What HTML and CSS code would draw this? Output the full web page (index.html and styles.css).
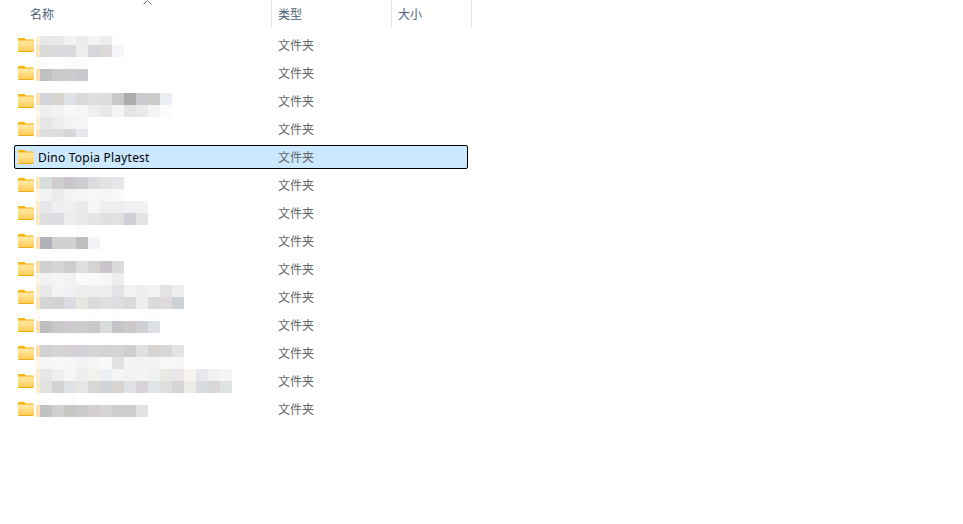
FILE: index.html
```html
<!DOCTYPE html>
<html lang="zh">
<head>
<meta charset="utf-8">
<title>文件列表</title>
<link rel="stylesheet" href="styles.css">
</head>
<body>
<svg class="defs" width="0" height="0" aria-hidden="true">
  <defs>
    <linearGradient id="fg" x1="0" y1="0" x2="0" y2="1">
      <stop offset="0" stop-color="#ffe9a6"/>
      <stop offset="1" stop-color="#fdcf5e"/>
    </linearGradient>
    <symbol id="folder" viewBox="0 0 16 14">
      <path d="M0 1.2C0 .5.5 0 1.2 0h4.6c.4 0 .7.1 1 .4L8.200 1.600H14.800c.7 0 1.200.5 1.200 1.200V4H0z" fill="#f6b308"/>
      <path d="M0 10h16v2.800c0 .7-.5 1.200-1.200 1.200H1.200C.5 14 0 13.500 0 12.800z" fill="#efaa10"/>
      <path d="M0 3.600c0-.5.4-1 1-1h14c.6 0 1 .5 1 1V13H0z" fill="url(#fg)"/>
    </symbol>
  </defs>
</svg>
<div class="pane">
  <div class="header">
    <div class="col col-name">名称<span class="sort"><svg width="9" height="5" viewBox="0 0 9 5"><path d="M.5 4.500 4.500.5l4 4" fill="none" stroke="#777" stroke-width="1"/></svg></span></div>
    <div class="col col-type">类型</div>
    <div class="col col-size">大小</div>
  </div>
  <div class="list">
    <div class="row"><div class="name"><svg class="ico"><use href="#folder"/></svg></div><div class="type">文件夹</div></div>
    <div class="row"><div class="name"><svg class="ico"><use href="#folder"/></svg></div><div class="type">文件夹</div></div>
    <div class="row"><div class="name"><svg class="ico"><use href="#folder"/></svg></div><div class="type">文件夹</div></div>
    <div class="row"><div class="name"><svg class="ico"><use href="#folder"/></svg></div><div class="type">文件夹</div></div>
    <div class="row selected"><div class="name"><svg class="ico"><use href="#folder"/></svg><span class="label">Dino Topia Playtest</span></div><div class="type">文件夹</div></div>
    <div class="row"><div class="name"><svg class="ico"><use href="#folder"/></svg></div><div class="type">文件夹</div></div>
    <div class="row"><div class="name"><svg class="ico"><use href="#folder"/></svg></div><div class="type">文件夹</div></div>
    <div class="row"><div class="name"><svg class="ico"><use href="#folder"/></svg></div><div class="type">文件夹</div></div>
    <div class="row"><div class="name"><svg class="ico"><use href="#folder"/></svg></div><div class="type">文件夹</div></div>
    <div class="row"><div class="name"><svg class="ico"><use href="#folder"/></svg></div><div class="type">文件夹</div></div>
    <div class="row"><div class="name"><svg class="ico"><use href="#folder"/></svg></div><div class="type">文件夹</div></div>
    <div class="row"><div class="name"><svg class="ico"><use href="#folder"/></svg></div><div class="type">文件夹</div></div>
    <div class="row"><div class="name"><svg class="ico"><use href="#folder"/></svg></div><div class="type">文件夹</div></div>
    <div class="row"><div class="name"><svg class="ico"><use href="#folder"/></svg></div><div class="type">文件夹</div></div>
  </div>
</div>
<svg class="mosaic" width="963" height="524" viewBox="0 0 963 524" aria-hidden="true" shape-rendering="crispEdges">
  <g transform="translate(0 36)"><rect class="t9" x="36" fill="#fdf0d6"/><rect class="c9" x="40" fill="#e8e8e8"/><rect class="c9" x="52" fill="#eae9eb"/><rect class="c9" x="64" fill="#f2f2f2"/><rect class="c9" x="76" fill="#ecebed"/><rect class="c9" x="88" fill="#f4f4f2"/><rect class="c9" x="100" fill="#ededee"/><rect class="c9" x="112" fill="#fdfdfd"/></g>
  <g transform="translate(0 45)"><rect class="t" x="36" fill="#fbe6bd"/><rect class="c" x="40" fill="#d9d9d7"/><rect class="c" x="52" fill="#dbdadc"/><rect class="c" x="64" fill="#dadadc"/><rect class="c" x="76" fill="#efecec"/><rect class="c" x="88" fill="#d6d7db"/><rect class="c" x="100" fill="#dcdad9"/><rect class="c" x="112" fill="#f5f6fa"/></g>
  <g transform="translate(0 57)"><rect class="t" x="36" fill="#fffcf5"/><rect class="c" x="40" fill="#fefefc"/><rect class="c" x="64" fill="#fcfcfc"/><rect class="c" x="76" fill="#fcfcfc"/></g>
  <g transform="translate(0 69)"><rect class="t" x="36" fill="#fbe0ad"/><rect class="c" x="40" fill="#c0c0c0"/><rect class="c" x="52" fill="#cbc9cc"/><rect class="c" x="64" fill="#cdcccc"/><rect class="c" x="76" fill="#cac7cd"/></g>
  <g transform="translate(0 93)"><rect class="t" x="36" fill="#fbe3b6"/><rect class="c" x="40" fill="#d3d6da"/><rect class="c" x="52" fill="#d8d5d0"/><rect class="c" x="64" fill="#dfe2e8"/><rect class="c" x="76" fill="#dbdadb"/><rect class="c" x="88" fill="#dededf"/><rect class="c" x="100" fill="#dcdddf"/><rect class="c" x="112" fill="#c9c8c6"/><rect class="c" x="124" fill="#aeadab"/><rect class="c" x="136" fill="#cbcbcf"/><rect class="c" x="148" fill="#cdcccb"/><rect class="c" x="160" fill="#ebeff3"/></g>
  <g transform="translate(0 105)"><rect class="t" x="36" fill="#fef6e6"/><rect class="c" x="40" fill="#f0f0f0"/><rect class="c" x="52" fill="#f3f3f3"/><rect class="c" x="64" fill="#f8f8f8"/><rect class="c" x="76" fill="#f6f6f6"/><rect class="c" x="88" fill="#efefef"/><rect class="c" x="100" fill="#e9e9e9"/><rect class="c" x="112" fill="#f4f4f4"/><rect class="c" x="124" fill="#e5e5e4"/><rect class="c" x="136" fill="#e9eaeb"/><rect class="c" x="148" fill="#f3f4f4"/><rect class="c" x="160" fill="#fafbfb"/></g>
  <g transform="translate(0 117)"><rect class="t" x="36" fill="#fdf0d6"/><rect class="c" x="40" fill="#e6e6e6"/><rect class="c" x="52" fill="#ededed"/><rect class="c" x="64" fill="#f3f3f3"/><rect class="c" x="76" fill="#f5f5f5"/></g>
  <g transform="translate(0 129)"><rect class="t8" x="36" fill="#fbe6bd"/><rect class="c8" x="40" fill="#dddde0"/><rect class="c8" x="52" fill="#dcdcdf"/><rect class="c8" x="64" fill="#d8d8d8"/><rect class="c8" x="76" fill="#e7e7ed"/></g>
  <g transform="translate(0 177)"><rect class="t" x="36" fill="#fbe5bb"/><rect class="c" x="40" fill="#d8dde0"/><rect class="c" x="52" fill="#cfcecd"/><rect class="c" x="64" fill="#c9c6cc"/><rect class="c" x="76" fill="#cdced1"/><rect class="c" x="88" fill="#dcdce0"/><rect class="c" x="100" fill="#e3e2e0"/><rect class="c" x="112" fill="#e6e7ea"/></g>
  <g transform="translate(0 189)"><rect class="t" x="36" fill="#fef7e8"/><rect class="c" x="40" fill="#f3f3f4"/><rect class="c" x="52" fill="#ebebec"/><rect class="c" x="64" fill="#f3f3f4"/><rect class="c" x="76" fill="#f5f5f6"/><rect class="c" x="88" fill="#f7f7f6"/><rect class="c" x="100" fill="#f6f6f6"/><rect class="c" x="112" fill="#f9f9fa"/></g>
  <g transform="translate(0 201)"><rect class="t" x="36" fill="#fdeccb"/><rect class="c" x="40" fill="#e6e7ea"/><rect class="c" x="52" fill="#f0f0f2"/><rect class="c" x="64" fill="#f0f0f1"/><rect class="c" x="76" fill="#e9eaeb"/><rect class="c" x="88" fill="#f6f6f6"/><rect class="c" x="100" fill="#eeeeee"/><rect class="c" x="112" fill="#eeeeee"/><rect class="c" x="124" fill="#f0f0f2"/><rect class="c" x="136" fill="#f2f2f3"/></g>
  <g transform="translate(0 213)"><rect class="t" x="36" fill="#fbe8c2"/><rect class="c" x="40" fill="#dfdfe3"/><rect class="c" x="52" fill="#dcdde0"/><rect class="c" x="64" fill="#ededec"/><rect class="c" x="76" fill="#e9e9ea"/><rect class="c" x="88" fill="#e4e5e5"/><rect class="c" x="100" fill="#e0e0e0"/><rect class="c" x="112" fill="#e1e1e1"/><rect class="c" x="124" fill="#cfcfd5"/><rect class="c" x="136" fill="#e4e4e4"/></g>
  <g transform="translate(0 225)"><rect class="t" x="36" fill="#fffbf2"/><rect class="c" x="76" fill="#fdfdfd"/></g>
  <g transform="translate(0 237)"><rect class="t" x="36" fill="#fbe0ad"/><rect class="c" x="40" fill="#b3b2b8"/><rect class="c" x="52" fill="#d0d0d0"/><rect class="c" x="64" fill="#d1d1cf"/><rect class="c" x="76" fill="#bfbebc"/><rect class="c" x="88" fill="#f2f4f7"/></g>
  <g transform="translate(0 261)"><rect class="t" x="36" fill="#fbe0ad"/><rect class="c" x="40" fill="#cfcfcf"/><rect class="c" x="52" fill="#d5d5d5"/><rect class="c" x="64" fill="#cccdcf"/><rect class="c" x="76" fill="#dedede"/><rect class="c" x="88" fill="#d5d4d3"/><rect class="c" x="100" fill="#c9c5ca"/><rect class="c" x="112" fill="#dbdbde"/></g>
  <g transform="translate(0 273)"><rect class="t" x="36" fill="#fef6e6"/><rect class="c" x="40" fill="#f1f2f1"/><rect class="c" x="52" fill="#f5f5f5"/><rect class="c" x="64" fill="#f0f3f2"/><rect class="c" x="76" fill="#fafafa"/><rect class="c" x="88" fill="#f9f9f8"/><rect class="c" x="100" fill="#f7f7f7"/><rect class="c" x="112" fill="#eeeeef"/></g>
  <g transform="translate(0 285)"><rect class="t" x="36" fill="#fdedcf"/><rect class="c" x="40" fill="#e8e8e8"/><rect class="c" x="52" fill="#f3f3f4"/><rect class="c" x="64" fill="#f1f1f3"/><rect class="c" x="76" fill="#eeeeec"/><rect class="c" x="88" fill="#efefed"/><rect class="c" x="100" fill="#eeeeec"/><rect class="c" x="112" fill="#e4e2e7"/><rect class="c" x="124" fill="#f2f2f2"/><rect class="c" x="136" fill="#efeff1"/><rect class="c" x="148" fill="#f3f3f4"/><rect class="c" x="160" fill="#e3e3e4"/><rect class="c" x="172" fill="#efefef"/></g>
  <g transform="translate(0 297)"><rect class="t" x="36" fill="#fbe6bd"/><rect class="c" x="40" fill="#d5d5d3"/><rect class="c" x="52" fill="#d1d2d1"/><rect class="c" x="64" fill="#dcdbe2"/><rect class="c" x="76" fill="#e6e6e3"/><rect class="c" x="88" fill="#dcdadc"/><rect class="c" x="100" fill="#e0dfdf"/><rect class="c" x="112" fill="#dedddf"/><rect class="c" x="124" fill="#dadbd9"/><rect class="c" x="136" fill="#edefef"/><rect class="c" x="148" fill="#dadadc"/><rect class="c" x="160" fill="#dfdbdc"/><rect class="c" x="172" fill="#cdd1d4"/></g>
  <g transform="translate(0 309)"><rect class="t" x="36" fill="#fffbf2"/><rect class="c" x="88" fill="#fefefd"/><rect class="c" x="112" fill="#fefefe"/><rect class="c" x="148" fill="#fcfdfd"/></g>
  <g transform="translate(0 321)"><rect class="t" x="36" fill="#fbe0ad"/><rect class="c" x="40" fill="#bfbfbf"/><rect class="c" x="52" fill="#c8c9c7"/><rect class="c" x="64" fill="#cec9cd"/><rect class="c" x="76" fill="#cdcdcb"/><rect class="c" x="88" fill="#cac9c8"/><rect class="c" x="100" fill="#dadbdd"/><rect class="c" x="112" fill="#c7c4c8"/><rect class="c" x="124" fill="#cdc9c8"/><rect class="c" x="136" fill="#cfd0d3"/><rect class="c" x="148" fill="#dce0e4"/></g>
  <g transform="translate(0 345)"><rect class="t" x="36" fill="#fbe0ad"/><rect class="c" x="40" fill="#d1d1d4"/><rect class="c" x="52" fill="#d6d4d5"/><rect class="c" x="64" fill="#d6d2d4"/><rect class="c" x="76" fill="#d3d0d8"/><rect class="c" x="88" fill="#d6d5d3"/><rect class="c" x="100" fill="#d3d3d3"/><rect class="c" x="112" fill="#d5d4d5"/><rect class="c" x="124" fill="#cdcecf"/><rect class="c" x="136" fill="#dee1df"/><rect class="c" x="148" fill="#d6d4d1"/><rect class="c" x="160" fill="#d8d7da"/><rect class="c" x="172" fill="#e4e4e4"/></g>
  <g transform="translate(0 357)"><rect class="t" x="36" fill="#fef6e6"/><rect class="c" x="40" fill="#f6f6f6"/><rect class="c" x="52" fill="#f7f7f7"/><rect class="c" x="64" fill="#f6f6f6"/><rect class="c" x="76" fill="#f3f3f3"/><rect class="c" x="88" fill="#f5f5f5"/><rect class="c" x="100" fill="#f9f9f9"/><rect class="c" x="112" fill="#e1e1e1"/><rect class="c" x="124" fill="#f4f4f4"/><rect class="c" x="136" fill="#f4f4f4"/><rect class="c" x="148" fill="#f3f4f4"/><rect class="c" x="160" fill="#f8f8f8"/><rect class="c" x="172" fill="#f6f6f6"/></g>
  <g transform="translate(0 369)"><rect class="t" x="36" fill="#fdedcf"/><rect class="c" x="40" fill="#e7e7e8"/><rect class="c" x="52" fill="#efefed"/><rect class="c" x="64" fill="#f6f6f6"/><rect class="c" x="76" fill="#efeff0"/><rect class="c" x="88" fill="#f2f1ec"/><rect class="c" x="100" fill="#ecf0f3"/><rect class="c" x="112" fill="#f4f4f4"/><rect class="c" x="124" fill="#f2f3f3"/><rect class="c" x="136" fill="#f4f4f4"/><rect class="c" x="148" fill="#eef0f0"/><rect class="c" x="160" fill="#e9e9e6"/><rect class="c" x="172" fill="#e8e6ea"/><rect class="c" x="184" fill="#f7f3ee"/><rect class="c" x="196" fill="#e7e8ec"/><rect class="c" x="208" fill="#f0f2f2"/><rect class="c" x="220" fill="#f5f5f5"/></g>
  <g transform="translate(0 381)"><rect class="t" x="36" fill="#fdeccb"/><rect class="c" x="40" fill="#e1e1df"/><rect class="c" x="52" fill="#d2d2d0"/><rect class="c" x="64" fill="#e0e1e4"/><rect class="c" x="76" fill="#e7e6e4"/><rect class="c" x="88" fill="#d9d8d6"/><rect class="c" x="100" fill="#d1d2d5"/><rect class="c" x="112" fill="#d7d3d1"/><rect class="c" x="124" fill="#e0e2e3"/><rect class="c" x="136" fill="#d7d3d8"/><rect class="c" x="148" fill="#e1e4e6"/><rect class="c" x="160" fill="#dededc"/><rect class="c" x="172" fill="#d6d3d5"/><rect class="c" x="184" fill="#ecebe6"/><rect class="c" x="196" fill="#dadbde"/><rect class="c" x="208" fill="#dad7da"/><rect class="c" x="220" fill="#e0e3e3"/></g>
  <g transform="translate(0 393)"><rect class="t" x="36" fill="#fffbf2"/><rect class="c" x="64" fill="#fdfdfd"/><rect class="c" x="112" fill="#fefefd"/></g>
  <g transform="translate(0 405)"><rect class="t" x="36" fill="#fbe0ad"/><rect class="c" x="40" fill="#c2c1c3"/><rect class="c" x="52" fill="#cecfd1"/><rect class="c" x="64" fill="#c8c7c4"/><rect class="c" x="76" fill="#cbcbcb"/><rect class="c" x="88" fill="#d2cdce"/><rect class="c" x="100" fill="#d5d5d5"/><rect class="c" x="112" fill="#cdcdcd"/><rect class="c" x="124" fill="#cdcdcd"/><rect class="c" x="136" fill="#e2e2e2"/></g>
</svg>
</body>
</html>
```

FILE: styles.css
```css
html, body {
  margin: 0;
  padding: 0;
  background: #fff;
}
body {
  position: relative;
  width: 963px;
  height: 524px;
  overflow: hidden;
  font-family: "Noto Sans", "Noto Sans CJK SC", sans-serif;
  font-size: 12px;
}
.defs {
  position: absolute;
}
.pane {
  width: 472px;
}
.header {
  display: flex;
  height: 27px;
  color: #4c607a;
}
.col {
  box-sizing: border-box;
  height: 27px;
  line-height: 27px;
  border-right: 1px solid #e5e5e5;
  font-family: "Noto Sans CJK SC", sans-serif;
}
.col-name {
  position: relative;
  width: 272px;
  padding-left: 30px;
}
.col-type {
  width: 120px;
  padding-left: 6px;
}
.col-size {
  width: 80px;
  padding-left: 6px;
}
.sort {
  position: absolute;
  left: 143px;
  top: 0;
  line-height: 0;
}
.list {
  display: flex;
  flex-direction: column;
  gap: 4px;
  padding: 6px 4px 0 14px;
}
.row {
  box-sizing: border-box;
  display: flex;
  align-items: center;
  height: 24px;
  border: 1px solid transparent;
  border-radius: 2px;
}
.row.selected {
  background: #cce8ff;
  border-color: #000;
}
.name {
  display: flex;
  align-items: center;
  width: 260px;
  padding-left: 3px;
  color: #000;
}
.ico {
  width: 16px;
  height: 14px;
  flex: none;
}
.label {
  margin-left: 4px;
  letter-spacing: .22px;
  line-height: 24px;
  padding-top: 1px;
  white-space: nowrap;
}
.type {
  color: #666;
  font-family: "Noto Sans CJK SC", sans-serif;
  line-height: 22px;
}
.mosaic {
  position: absolute;
  left: 0;
  top: 0;
  pointer-events: none;
}
.c { width: 12px; height: 12px; }
.c9 { width: 12px; height: 9px; }
.c8 { width: 12px; height: 8px; }
.t { width: 4px; height: 12px; }
.t9 { width: 4px; height: 9px; }
.t8 { width: 4px; height: 8px; }
```
